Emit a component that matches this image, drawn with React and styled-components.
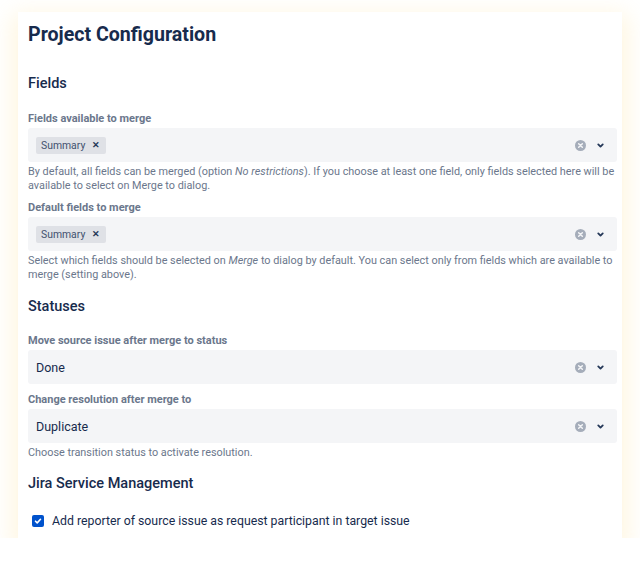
import * as React from 'react';
import styled, { createGlobalStyle } from 'styled-components';

const GlobalStyle = createGlobalStyle`
    body {
        margin: 0;
        background: #ffffff;
        font-family: Roboto, "Liberation Sans", sans-serif;
        color: #172b4d;
    }
`;

// Card with warm glow
const Card = styled.div`
    width: 604px;
    margin: 12px 0 0 18px;
    padding: 9px 5px 8px 10px;
    box-sizing: border-box;
    background: #ffffff;
    box-shadow: 0 8px 22px 6px rgba(255, 222, 135, 0.26);
`;

const Title = styled.h1`
    margin: 0;
    font-size: 19.6px;
    line-height: 28px;
    font-weight: 700;
    color: #172b4d;
`;

const SectionTitle = styled.h2`
    margin: ${p => p.$top}px 0 0 0;
    font-size: 14.5px;
    line-height: 20px;
    font-weight: 500;
    color: #172b4d;
`;

const Label = styled.div`
    margin-top: ${p => p.$top}px;
    font-size: 11px;
    line-height: 16px;
    font-weight: 700;
    color: #6b778c;
`;

const SelectBox = styled.div`
    margin-top: 1px;
    height: 34px;
    display: flex;
    align-items: center;
    padding: 0 12px 0 8px;
    background: #f4f5f7;
    border-radius: 3px;
`;

const Values = styled.div`
    flex: 1;
    display: flex;
    align-items: center;
`;

const Tag = styled.span`
    display: inline-flex;
    align-items: center;
    gap: 7px;
    height: 17px;
    padding: 0 6px 0 5px;
    background: #dfe1e6;
    border-radius: 2px;
    font-size: 10.4px;
    color: #42526e;
`;

const TagRemove = styled.span`
    font-size: 9px;
    font-weight: 700;
    color: #253858;
`;

const Value = styled.span`
    font-size: 12.5px;
    color: #172b4d;
`;

const Indicators = styled.div`
    display: flex;
    align-items: center;
    gap: 10px;
`;

const Helper = styled.div`
    margin-top: 3px;
    font-size: 10.85px;
    line-height: 14px;
    color: #6b778c;
`;

const CheckRow = styled.label`
    margin-top: ${p => p.$top}px;
    display: flex;
    align-items: center;
    gap: 8px;
    padding-left: 4px;
    font-size: 12.3px;
    line-height: 18px;
    color: #172b4d;
`;

const Box = styled.span`
    width: 12px;
    height: 12px;
    border-radius: 2px;
    background: #0052cc;
    display: flex;
    align-items: center;
    justify-content: center;
`;

const ClearIcon = () => (
    <svg width="11" height="11" viewBox="0 0 12 12">
        <circle cx="6" cy="6" r="6" fill="#a5adba" />
        <path d="M4 4l4 4M8 4l-4 4" stroke="#f4f5f7" strokeWidth="1.6" strokeLinecap="round" />
    </svg>
);

const Chevron = () => (
    <svg width="9" height="9" viewBox="0 0 10 10">
        <path d="M2.5 3.8l2.5 2.5L7.5 3.8" stroke="#253858" strokeWidth="2" fill="none" strokeLinecap="round" strokeLinejoin="round" />
    </svg>
);

const Select = ({ children }) => (
    <SelectBox>
        <Values>{children}</Values>
        <Indicators>
            <ClearIcon />
            <Chevron />
        </Indicators>
    </SelectBox>
);

export default function App() {
    return (
        <>
            <GlobalStyle />
            <Card>
                <Title>Project Configuration</Title>

                {/* Fields */}
                <SectionTitle $top={25}>Fields</SectionTitle>
                <Label $top={17}>Fields available to merge</Label>
                <Select>
                    <Tag>Summary<TagRemove>✕</TagRemove></Tag>
                </Select>
                <Helper>
                    By default, all fields can be merged (option <i>No restrictions</i>). If you choose at least one field, only fields selected here will be available to select on Merge to dialog.
                </Helper>

                <Label $top={7}>Default fields to merge</Label>
                <Select>
                    <Tag>Summary<TagRemove>✕</TagRemove></Tag>
                </Select>
                <Helper>
                    Select which fields should be selected on <i>Merge</i> to dialog by default. You can select only from fields which are available to merge (setting above).
                </Helper>

                {/* Statuses */}
                <SectionTitle $top={15}>Statuses</SectionTitle>
                <Label $top={16}>Move source issue after merge to status</Label>
                <Select>
                    <Value>Done</Value>
                </Select>
                <Label $top={8}>Change resolution after merge to</Label>
                <Select>
                    <Value>Duplicate</Value>
                </Select>
                <Helper>Choose transition status to activate resolution.</Helper>

                {/* Jira Service Management */}
                <SectionTitle $top={14}>Jira Service Management</SectionTitle>
                <CheckRow $top={18}>
                    <Box>
                        <svg width="8" height="8" viewBox="0 0 8 8">
                            <path d="M1.5 4.2l1.7 1.7L6.5 2.3" stroke="#fff" strokeWidth="1.6" fill="none" strokeLinecap="round" strokeLinejoin="round" />
                        </svg>
                    </Box>
                    Add reporter of source issue as request participant in target issue
                </CheckRow>
            </Card>
        </>
    );
}
